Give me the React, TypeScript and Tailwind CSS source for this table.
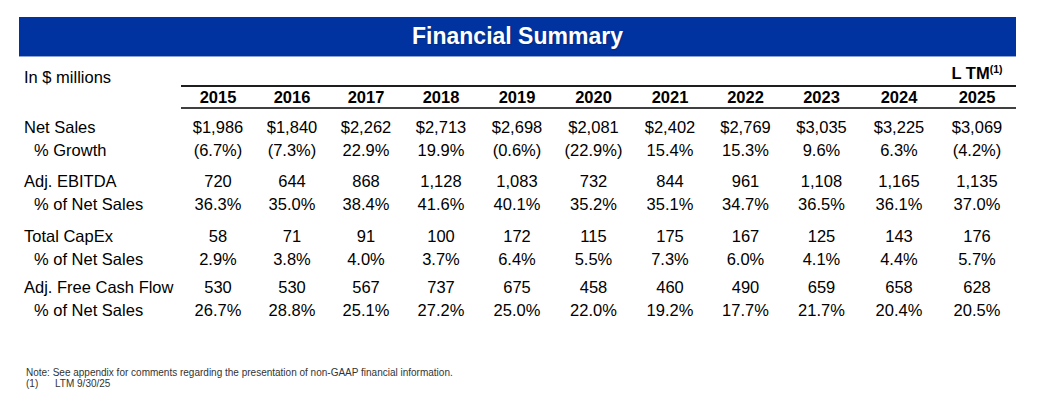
import React from "react";

const years = ["2015", "2016", "2017", "2018", "2019", "2020", "2021", "2022", "2023", "2024", "2025"];

// column widths are not quite even in the source slide
const colWidths = [
  "w-[74px]",
  "w-[74px]",
  "w-[74px]",
  "w-[76px]",
  "w-[76px]",
  "w-[77px]",
  "w-[76px]",
  "w-[75px]",
  "w-[77px]",
  "w-[78px]",
  "w-[78px]",
];

const groups = [
  {
    gap: "mt-[7px]",
    rows: [
      { label: "Net Sales", sub: false, values: ["$1,986", "$1,840", "$2,262", "$2,713", "$2,698", "$2,081", "$2,402", "$2,769", "$3,035", "$3,225", "$3,069"] },
      { label: "% Growth", sub: true, values: ["(6.7%)", "(7.3%)", "22.9%", "19.9%", "(0.6%)", "(22.9%)", "15.4%", "15.3%", "9.6%", "6.3%", "(4.2%)"] },
    ],
  },
  {
    gap: "mt-[8px]",
    rows: [
      { label: "Adj. EBITDA", sub: false, values: ["720", "644", "868", "1,128", "1,083", "732", "844", "961", "1,108", "1,165", "1,135"] },
      { label: "% of Net Sales", sub: true, values: ["36.3%", "35.0%", "38.4%", "41.6%", "40.1%", "35.2%", "35.1%", "34.7%", "36.5%", "36.1%", "37.0%"] },
    ],
  },
  {
    gap: "mt-[9px]",
    rows: [
      { label: "Total CapEx", sub: false, values: ["58", "71", "91", "100", "172", "115", "175", "167", "125", "143", "176"] },
      { label: "% of Net Sales", sub: true, values: ["2.9%", "3.8%", "4.0%", "3.7%", "6.4%", "5.5%", "7.3%", "6.0%", "4.1%", "4.4%", "5.7%"] },
    ],
  },
  {
    gap: "mt-[5px]",
    rows: [
      { label: "Adj. Free Cash Flow", sub: false, values: ["530", "530", "567", "737", "675", "458", "460", "490", "659", "658", "628"] },
      { label: "% of Net Sales", sub: true, values: ["26.7%", "28.8%", "25.1%", "27.2%", "25.0%", "22.0%", "19.2%", "17.7%", "21.7%", "20.4%", "20.5%"] },
    ],
  },
];

const App = () => {
  return (
    <div className="w-[1038px] h-[404px] bg-white text-black pt-[17px] font-['Liberation_Sans',Arial,sans-serif]">
      {/* title banner */}
      <div className="ml-[19px] w-[997px] h-[40px] bg-[#0033a0] border-b border-[#8ea4d8] flex items-center justify-center">
        <h1 className="text-white font-bold text-[23px] leading-none [text-shadow:1px_1px_1px_rgba(0,0,0,0.2)]">
          Financial Summary
        </h1>
      </div>

      {/* units + LTM label */}
      <div className="flex h-[28px] text-[16.5px]">
        <div className="w-[181px] pl-[24px] pt-[11px] leading-[18px]">In $ millions</div>
        <div className="w-[757px]" />
        <div className="w-[78px] pt-[7px] leading-[18px] text-center font-bold">
          L TM<sup className="text-[10.5px] relative -top-[6px]">(1)</sup>
        </div>
      </div>

      {/* years */}
      <div className="flex">
        <div className="w-[181px]" />
        <div className="flex border-t-2 border-b-2 border-t-[#1e1e1e] border-b-[#404040]">
          {years.map((y, i) => (
            <div key={y} className={`${colWidths[i]} text-center font-bold text-[16.5px] leading-[20px]`}>
              {y}
            </div>
          ))}
        </div>
      </div>

      {/* data */}
      {groups.map((g, gi) => (
        <div key={gi} className={g.gap}>
          {g.rows.map((r, ri) => (
            <div key={ri} className="flex text-[16.5px] leading-[23px]">
              <div className={`w-[181px] whitespace-nowrap ${r.sub ? "pl-[34px]" : "pl-[24px]"}`}>{r.label}</div>
              {r.values.map((v, vi) => (
                <div key={vi} className={`${colWidths[vi]} text-center`}>
                  {v}
                </div>
              ))}
            </div>
          ))}
        </div>
      ))}

      {/* footnotes */}
      <div className="mt-[45px] pl-[26px] text-[10px] leading-[11px] text-[#333333]">
        <p>Note: See appendix for comments regarding the presentation of non-GAAP financial information.</p>
        <p>
          <span className="inline-block w-[29px]">(1)</span>LTM 9/30/25
        </p>
      </div>
    </div>
  );
};

export default App;
